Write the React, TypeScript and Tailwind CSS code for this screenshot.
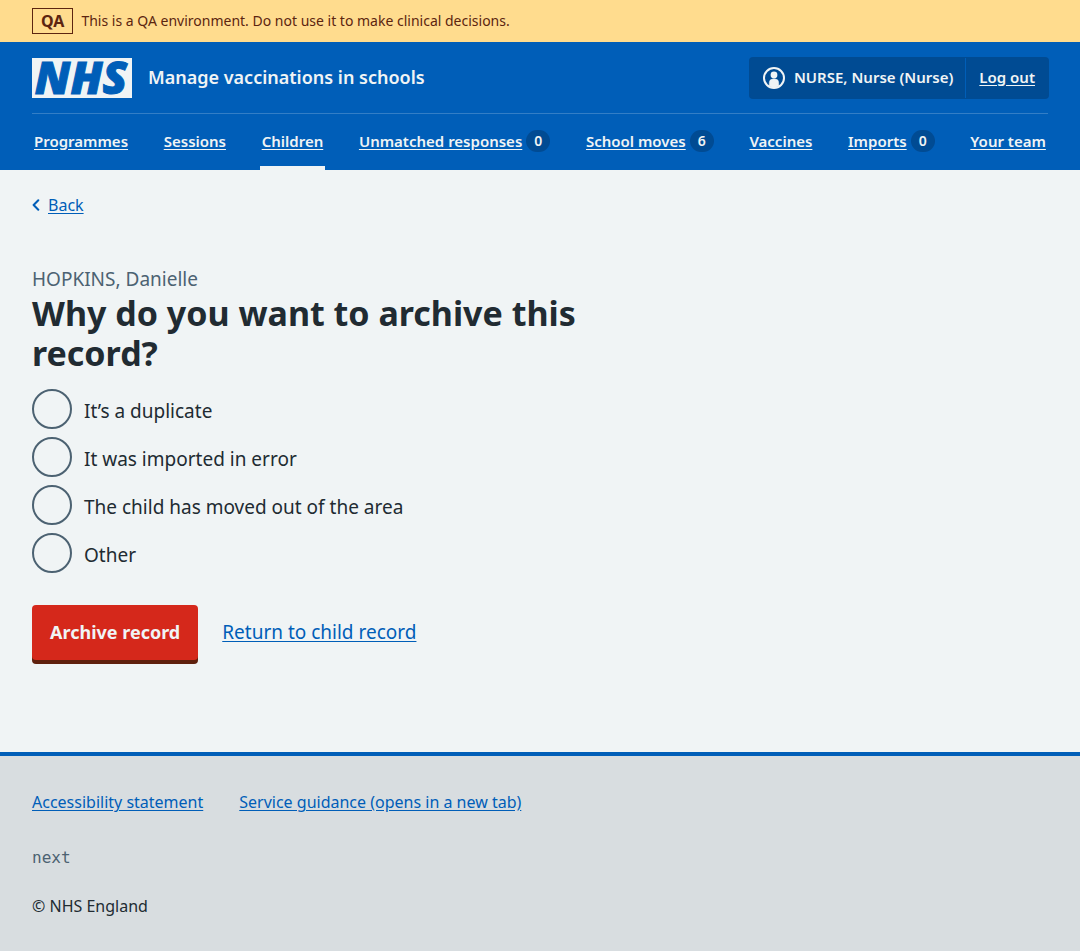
import React from "react";

type NavItem = { label: string; count?: number; current?: boolean };

const navItems: NavItem[] = [
  { label: "Programmes" },
  { label: "Sessions" },
  { label: "Children", current: true },
  { label: "Unmatched responses", count: 0 },
  { label: "School moves", count: 6 },
  { label: "Vaccines" },
  { label: "Imports", count: 0 },
  { label: "Your team" },
];

const reasons = [
  { value: "duplicate", label: "It’s a duplicate" },
  { value: "imported-in-error", label: "It was imported in error" },
  { value: "moved-out-of-area", label: "The child has moved out of the area" },
  { value: "other", label: "Other" },
];

function EnvironmentBanner() {
  return (
    <div className="flex items-center gap-2 bg-[#ffdc8e] px-8 py-2 text-[#5c2510]">
      <strong className="border border-[#5c2510] px-2 text-base leading-6 font-bold">QA</strong>
      <span className="text-sm leading-6">
        This is a QA environment. Do not use it to make clinical decisions.
      </span>
    </div>
  );
}

function Logo() {
  return (
    <a
      href="#"
      aria-label="NHS"
      className="flex h-10 w-[100px] items-center justify-center bg-[#f0f4f5] pr-0.5 pb-0.5 font-['Open_Sans',sans-serif] text-[45px] leading-9 font-extrabold text-[#005eb8] italic [-webkit-text-stroke:1px_#005eb8]"
    >
      NHS
    </a>
  );
}

function UserIcon() {
  return (
    <svg viewBox="0 0 24 24" className="size-6" aria-hidden="true">
      <circle cx="12" cy="12" r="10" fill="none" stroke="currentColor" strokeWidth="2" />
      <circle cx="12" cy="9" r="3.4" fill="currentColor" />
      <path
        d="M7.3 20v-3.2A3.8 3.8 0 0 1 11.1 13h1.8a3.8 3.8 0 0 1 3.8 3.8V20A10 10 0 0 1 7.3 20z"
        fill="currentColor"
        stroke="currentColor"
        strokeWidth="0.5"
      />
    </svg>
  );
}

function Header() {
  return (
    <header className="bg-[#005eb8] px-8 text-[#f0f4f5]">
      <div className="flex items-center justify-between border-b border-[#337ec6] pt-4 pb-[15px]">
        <div className="flex items-center gap-4">
          <Logo />
          <span className="pb-0.5 text-lg leading-6 font-semibold">Manage vaccinations in schools</span>
        </div>
        <div className="flex h-10 items-stretch rounded-[3px] bg-[#004b93] text-[15px] font-semibold ring-1 ring-[#004b93]">
          <span className="flex items-center gap-2 px-3">
            <UserIcon />
            <span className="pb-0.5">NURSE, Nurse (Nurse)</span>
          </span>
          <a href="#" className="flex items-center border-l border-[#005eb8] px-[13px] pb-0.5 underline underline-offset-2">
            Log out
          </a>
        </div>
      </div>
      <nav aria-label="Menu">
        <ul className="flex h-14 items-stretch justify-between text-[15px] font-semibold">
          {navItems.map((item) => (
            <li key={item.label} className="flex">
              <a
                href="#"
                aria-current={item.current ? "page" : undefined}
                className={
                  item.current
                    ? "flex items-center gap-1 border-t-2 border-b-4 border-t-transparent border-b-[#f0f4f5] px-0.5"
                    : "flex items-center gap-1 border-t-2 border-b-4 border-transparent px-0.5"
                }
              >
                <span className="underline underline-offset-2">{item.label}</span>
                {item.count !== undefined && (
                  <span className="flex h-[22px] w-6 items-center justify-center rounded-full bg-[#004b93] text-sm">
                    {item.count}
                  </span>
                )}
              </a>
            </li>
          ))}
        </ul>
      </nav>
    </header>
  );
}

export default function App() {
  return (
    <div className="flex min-h-screen flex-col bg-[#f0f4f5] font-['Noto_Sans','Open_Sans',sans-serif] text-[#212b32]">
      <EnvironmentBanner />
      <Header />
      <div className="px-8 pt-[23px]">
        <a href="#" className="inline-flex items-center gap-2 text-base leading-6 text-[#005eb8]">
          <svg viewBox="0 0 8 12" className="h-3 w-2" aria-hidden="true">
            <path
              d="M6.3 1.2 1.6 6l4.7 4.8"
              fill="none"
              stroke="currentColor"
              strokeWidth="2"
              strokeLinecap="round"
              strokeLinejoin="round"
            />
          </svg>
          <span className="underline underline-offset-2">Back</span>
        </a>
      </div>
      <main className="grow px-8 pt-12 pb-[88px]">
        <form className="max-w-[600px]" onSubmit={(event) => event.preventDefault()}>
          <fieldset>
            <legend className="pb-4">
              <span className="block text-[19px] leading-7 text-[#4c6272]">HOPKINS, Danielle</span>
              <h1 className="text-[34px] leading-10 font-bold">Why do you want to archive this record?</h1>
            </legend>
            <div className="flex flex-col gap-2">
              {reasons.map((reason) => (
                <div key={reason.value} className="flex items-center gap-3">
                  <input
                    type="radio"
                    id={reason.value}
                    name="reason"
                    value={reason.value}
                    className="size-10 shrink-0 appearance-none rounded-full border-2 border-[#4c6272] checked:border-[12px]"
                  />
                  <label htmlFor={reason.value} className="pt-1 text-[19px] leading-7">
                    {reason.label}
                  </label>
                </div>
              ))}
            </div>
          </fieldset>
          <div className="flex items-center gap-6 pt-8">
            <button
              type="submit"
              className="h-[55px] rounded bg-[#d5281b] px-[18px] pb-0.5 text-lg font-bold text-[#f0f4f5] shadow-[0_4px_0_#5f200d]"
            >
              Archive record
            </button>
            <a href="#" className="text-[19px] text-[#005eb8] underline underline-offset-2">
              Return to child record
            </a>
          </div>
        </form>
      </main>
      <footer className="border-t-4 border-[#005eb8] bg-[#d8dde0] px-8 pt-[34px] pb-[33px] text-base leading-6">
        <ul className="flex gap-9 text-[#005eb8] underline underline-offset-2">
          <li>
            <a href="#">Accessibility statement</a>
          </li>
          <li>
            <a href="#">Service guidance (opens in a new tab)</a>
          </li>
        </ul>
        <p className="pt-8 font-['DejaVu_Sans_Mono',monospace] text-[#4c6272]">next</p>
        <p className="pt-6">© NHS England</p>
      </footer>
    </div>
  );
}
